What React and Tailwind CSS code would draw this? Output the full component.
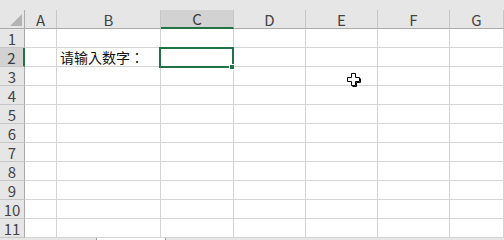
const cols = [
  { key: "A", w: "w-[32px]" },
  { key: "B", w: "w-[104px]" },
  { key: "C", w: "w-[73px]" },
  { key: "D", w: "w-[72px]" },
  { key: "E", w: "w-[72px]" },
  { key: "F", w: "w-[72px]" },
  { key: "G", w: "w-[54px]" },
];

const rows = [1, 2, 3, 4, 5, 6, 7, 8, 9, 10, 11];

function HeaderRow() {
  return (
    <div className="flex h-[29px] bg-[#e6e6e6]">
      <div className="w-[25px] h-full flex items-end">
        <div className="w-full h-[19px] border-r border-b border-[#ababab] flex items-end justify-end pr-[2px] pb-[2px]">
          <svg width="12" height="12" viewBox="0 0 12 12">
            <polygon points="12,0 12,12 0,12" fill="#b4b4b4" />
          </svg>
        </div>
      </div>
      {cols.map((c) => {
        const active = c.key === "C";
        return (
          <div key={c.key} className={`${c.w} h-full flex items-end`}>
            <div
              className={
                active
                  ? "w-full h-[19px] bg-[#d2d2d2] border-r border-r-[#c6c6c6] border-b-2 border-b-[#217346] flex items-center justify-center text-[15px] text-[#3a3a3a]"
                  : "w-full h-[19px] border-r border-r-[#c6c6c6] border-b border-b-[#ababab] flex items-center justify-center text-[15px] text-[#444]"
              }
            >
              {c.key}
            </div>
          </div>
        );
      })}
    </div>
  );
}

function Row({ n }) {
  const active = n === 2;
  return (
    <div className="flex h-[19px]">
      <div
        className={
          active
            ? "w-[25px] h-full bg-[#d2d2d2] border-r-2 border-r-[#217346] border-b border-b-[#c6c6c6] flex items-center justify-center text-[15px] text-[#3a3a3a]"
            : "w-[25px] h-full bg-[#e6e6e6] border-r border-r-[#ababab] border-b border-b-[#c6c6c6] flex items-center justify-center text-[15px] text-[#444]"
        }
      >
        {n}
      </div>
      {cols.map((c) => (
        <div
          key={c.key}
          className={`${c.w} h-full relative bg-white border-r border-b border-[#d4d4d4] flex items-center`}
        >
          {n === 2 && c.key === "B" && (
            <span className="pl-[3px] text-[14px] text-[#111] whitespace-nowrap font-['Noto_Sans_CJK_TC',sans-serif]">
              请输入数字：
            </span>
          )}
          {n === 2 && c.key === "C" && (
            <div className="absolute z-10 left-[-2px] top-[-1px] w-[75px] h-[21px] border-2 border-[#217346]">
              <div className="absolute left-[68px] top-[15px] w-[6px] h-[6px] bg-[#217346] border border-white" />
            </div>
          )}
        </div>
      ))}
    </div>
  );
}

export default function App() {
  return (
    <div className="relative w-[504px] h-[240px] overflow-hidden bg-white font-['Noto_Sans_CJK_SC',sans-serif] leading-none select-none">
      <HeaderRow />
      {rows.map((n) => (
        <Row key={n} n={n} />
      ))}
      <div className="flex h-[2px] bg-[#e6e6e6]">
        <div className="w-[97px] h-full border-r border-[#9b9b9b]" />
        <div className="w-[68px] h-full bg-white" />
        <div className="flex-1 h-full border-l border-[#9b9b9b]" />
      </div>
      {/* excel cell cursor */}
      <svg className="absolute z-20 left-[346px] top-[73px]" width="16" height="14" viewBox="0 0 16 14">
        <path
          d="M5.5 0.5 H9.5 V4.5 H13.5 V8.5 H9.5 V12.5 H5.5 V8.5 H1.5 V4.5 H5.5 Z"
          fill="#fff"
          stroke="#000"
          strokeWidth="1"
        />
        <path d="M10.5 9.5 V13.5 H6.5 M14.5 5.5 V9.5 H10.5" fill="none" stroke="#000" strokeWidth="1" />
      </svg>
    </div>
  );
}
